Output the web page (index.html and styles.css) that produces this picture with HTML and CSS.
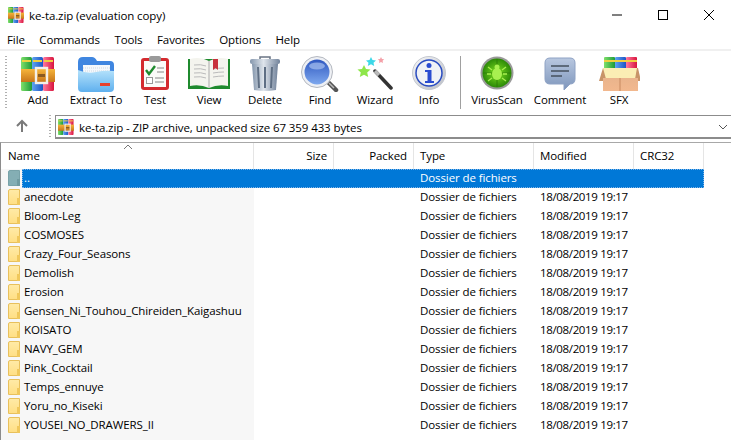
FILE: index.html
```html
<!DOCTYPE html>
<html lang="en">
<head>
  <meta charset="UTF-8">
  <title>ke-ta.zip (evaluation copy)</title>
  <link rel="stylesheet" href="styles.css">
</head>
<body>
  <svg class="defs" width="0" height="0">
    <defs>
      <linearGradient id="gGreen" x1="0" x2="1" y1="0" y2="0"><stop offset="0" stop-color="#7fe06a"/><stop offset="1" stop-color="#1f9a3a"/></linearGradient>
      <linearGradient id="gBlue" x1="0" x2="1" y1="0" y2="0"><stop offset="0" stop-color="#5fa4f2"/><stop offset="1" stop-color="#1c54c4"/></linearGradient>
      <linearGradient id="gRed" x1="0" x2="1" y1="0" y2="0"><stop offset="0" stop-color="#ff7aa0"/><stop offset="1" stop-color="#d8143c"/></linearGradient>
      <linearGradient id="gGold" x1="0" x2="0" y1="0" y2="1"><stop offset="0" stop-color="#f6b53a"/><stop offset="1" stop-color="#c8761a"/></linearGradient>
      <linearGradient id="gFolder" x1="0" x2="0" y1="0" y2="1"><stop offset="0" stop-color="#b5e2fb"/><stop offset="1" stop-color="#5fb0ee"/></linearGradient>
      <linearGradient id="gBin" x1="0" x2="1" y1="0" y2="0"><stop offset="0" stop-color="#8496ac"/><stop offset=".45" stop-color="#dfe5ec"/><stop offset="1" stop-color="#71829a"/></linearGradient>
      <linearGradient id="gLens" x1="0" x2="0" y1="0" y2="1"><stop offset="0" stop-color="#2f58c0"/><stop offset="1" stop-color="#7ea8ee"/></linearGradient>
      <linearGradient id="gSilver" x1="0" x2="1" y1="0" y2="1"><stop offset="0" stop-color="#f8f8f8"/><stop offset="1" stop-color="#b8bcc4"/></linearGradient>
      <linearGradient id="gBubble" x1="0" x2="0" y1="0" y2="1"><stop offset="0" stop-color="#b9c8e0"/><stop offset="1" stop-color="#7d95bb"/></linearGradient>
      <linearGradient id="gCard" x1="0" x2="0" y1="0" y2="1"><stop offset="0" stop-color="#eab48c"/><stop offset="1" stop-color="#f2b88e"/></linearGradient>
      <radialGradient id="gVirus"><stop offset="0" stop-color="#7fe020"/><stop offset="1" stop-color="#2c8a08"/></radialGradient>

      <symbol id="rar" viewBox="0 0 34 34">
        <rect x="0" y="0" width="11" height="34" rx="1.500" fill="url(#gGreen)"/>
        <rect x="11" y="0" width="11" height="34" rx="1.500" fill="url(#gBlue)"/>
        <rect x="22" y="0" width="11" height="34" rx="1.500" fill="url(#gRed)"/>
        <rect x="1" y="3" width="9" height="2" fill="#f0d040"/>
        <rect x="12" y="3" width="9" height="2" fill="#f0d040"/>
        <rect x="23" y="3" width="9" height="2" fill="#f0d040"/>
        <rect x="0" y="12" width="34" height="13" fill="url(#gGold)"/>
        <rect x="15" y="11" width="11" height="15" fill="none" stroke="#f4f0e8" stroke-width="2.4"/>
        <rect x="17" y="17" width="7" height="3" fill="#8a5a20"/>
      </symbol>
    </defs>
  </svg>

  <header class="title-bar">
    <svg class="app-icon" width="16" height="16"><use href="#rar"/></svg>
    <span class="title-text">ke-ta.zip (evaluation copy)</span>
    <div class="window-buttons">
      <svg width="12" height="12" viewBox="0 0 12 12"><path d="M1 6h10" stroke="#000"/></svg>
      <svg width="12" height="12" viewBox="0 0 12 12"><rect x="1.5" y="1.5" width="9" height="9" fill="none" stroke="#000"/></svg>
      <svg width="12" height="12" viewBox="0 0 12 12"><path d="M1 1l10 10M11 1L1 11" stroke="#000"/></svg>
    </div>
  </header>

  <nav class="menu-bar">
    <span>File</span><span>Commands</span><span>Tools</span><span>Favorites</span><span>Options</span><span>Help</span>
  </nav>

  <div class="toolbar">
    <div class="grip"></div>

    <div class="tool tool-add">
      <svg class="add-icon" width="34" height="34"><use href="#rar"/></svg>
      <span>Add</span>
    </div>

    <div class="tool tool-extract">
      <svg width="38" height="36" viewBox="0 0 38 36">
        <path d="M1 6q0-5 5-5h9q3 0 5 4h13q4 0 4 4v22H1z" fill="#3f86e0"/>
        <rect x="6" y="9" width="27" height="12" fill="#f4f8fc"/>
        <path d="M6 12h27M6 15h27M6 18h27" stroke="#cfd8e2" stroke-dasharray="1 1"/>
        <path d="M1 14q9 4 18 2t18-1v17q0 4-4 4H5q-4 0-4-4z" fill="url(#gFolder)"/>
        <rect x="23" y="27" width="10" height="3" fill="#e8402c"/>
      </svg>
      <span>Extract To</span>
    </div>

    <div class="tool tool-test">
      <svg width="30" height="36" viewBox="0 1 30 36">
        <rect x="1" y="3" width="28" height="32" rx="3" fill="#d42a2e"/>
        <rect x="4" y="6" width="22" height="26" fill="#fbfbf8"/>
        <rect x="9" y="1" width="12" height="6" rx="2" fill="#9a9a9a"/>
        <path d="M6 15l3 4 6-8" fill="none" stroke="#1f8a2e" stroke-width="2.4"/>
        <rect x="6.500" y="22.500" width="6" height="6" fill="#fff" stroke="#999"/>
        <path d="M17 13h7M17 17h7M15 23h9M15 27h9" stroke="#888"/>
      </svg>
      <span>Test</span>
    </div>

    <div class="tool tool-view">
      <svg width="42" height="36" viewBox="0 0 42 36">
        <path d="M0 3h42v30H0z" fill="#1f8a2e"/>
        <path d="M2 3q10-3 19 2q9-5 19-2v27q-10-2-19 2q-9-4-19-2z" fill="#f4f4ee"/>
        <path d="M21 5v27" stroke="#aaa"/>
        <path d="M6 9q7-1 12 1M6 13q7-1 12 1M6 17q7-1 12 1M6 21q7-1 12 1M25 13q6-1 11-1M25 17q6-1 11-1M25 21q6-1 11-1" stroke="#bbb" fill="none"/>
        <path d="M25 3h5v11l-2.500-2-2.500 2z" fill="#c8303c"/>
      </svg>
      <span>View</span>
    </div>

    <div class="tool tool-delete">
      <svg width="30" height="36" viewBox="0 0 30 36">
        <path d="M10 3V1h10v2" fill="none" stroke="#6a7484" stroke-width="1.500"/>
        <rect x="0" y="3" width="30" height="5" rx="2" fill="url(#gBin)"/>
        <path d="M2 8h26l-2 26q-11 2-22 0z" fill="url(#gBin)"/>
        <path d="M8 11l1 21M15 11v21M22 11l-1 21" stroke="#5f6f84" stroke-width="2"/>
      </svg>
      <span>Delete</span>
    </div>

    <div class="tool tool-find">
      <svg width="38" height="36" viewBox="0 0 38 36">
        <path d="M25 24l10 10" stroke="#555" stroke-width="4.500" stroke-linecap="round"/>
        <path d="M28 27l5 5" stroke="#bbb" stroke-width="1.500"/>
        <circle cx="16" cy="16" r="15.500" fill="#eef0f4" stroke="#b4b8c0"/>
        <circle cx="16" cy="16" r="12.500" fill="url(#gLens)"/>
        <ellipse cx="16" cy="10" rx="8" ry="3.500" fill="#a8c0f0" opacity=".7"/>
      </svg>
      <span>Find</span>
    </div>

    <div class="tool tool-wizard">
      <svg width="36" height="36" viewBox="0 0 36 36">
        <path d="M18 15l16 17" stroke="#333" stroke-width="3.500" stroke-linecap="round"/>
        <path d="M18 15l4 4" stroke="#bbb" stroke-width="3.500"/>
        <path d="M7 9l2 4 4.500.5-3.300 3 1 4.500-4.200-2.300L2.800 21l1-4.500-3.300-3 4.500-.5z" fill="#8ee64a"/>
        <path d="M14 1l1.500 3 3.500.4-2.500 2.300.7 3.300-3.200-1.700-3.200 1.700.7-3.300L9 4.400l3.500-.4z" fill="#3cd8e8"/>
        <path d="M24 1l1 2 2.200.3-1.600 1.500.4 2.200-2-1-2 1 .4-2.200-1.600-1.500L23 3z" fill="#f4a0a8"/>
      </svg>
      <span>Wizard</span>
    </div>

    <div class="tool tool-info">
      <svg width="34" height="36" viewBox="0 1 34 36">
        <circle cx="17" cy="18" r="16.500" fill="url(#gSilver)" stroke="#c4c8d0"/>
        <circle cx="17" cy="18" r="13" fill="#f0f2f6" stroke="#2a4cc0" stroke-width="1.500"/>
        <circle cx="17" cy="10.500" r="2.500" fill="#2a4cd0"/>
        <path d="M13 15h6.500v11H22v2h-9v-2h2.500v-9H13z" fill="#2a4cd0"/>
      </svg>
      <span>Info</span>
    </div>

    <div class="tool-sep"></div>

    <div class="tool tool-virus">
      <svg width="34" height="36" viewBox="0 -1 34 36">
        <circle cx="17" cy="16" r="16.500" fill="#9a9a9a"/>
        <circle cx="17" cy="16" r="14.500" fill="url(#gVirus)"/>
        <path d="M17 2v28M3 16h28" stroke="#2c7a08" stroke-width=".8"/>
        <ellipse cx="17" cy="17" rx="5" ry="6" fill="#a8f050"/>
        <circle cx="17" cy="10" r="2.500" fill="#a8f050"/>
        <path d="M12 13l-4-3M22 13l4-3M11 17H7M23 17h4M12 21l-4 3M22 21l4 3" stroke="#a8f050" stroke-width="1.300"/>
      </svg>
      <span>VirusScan</span>
    </div>

    <div class="tool tool-comment">
      <svg width="32" height="36" viewBox="0 0 32 36">
        <path d="M6 2h20q5 0 5 5v16q0 5-5 5l-6 6v-6H6q-5 0-5-5V7q0-5 5-5z" fill="url(#gBubble)" stroke="#8ea2c4"/>
        <path d="M7 10h18M7 15h18M7 20h11" stroke="#46505e" stroke-width="1.600"/>
      </svg>
      <span>Comment</span>
    </div>

    <div class="tool tool-sfx">
      <svg width="42" height="36" viewBox="-1 0 42 36">
        <rect x="5" y="1" width="11" height="16" rx="1" fill="url(#gGreen)"/>
        <rect x="16" y="1" width="11" height="16" rx="1" fill="url(#gBlue)"/>
        <rect x="27" y="1" width="11" height="16" rx="1" fill="url(#gRed)"/>
        <rect x="5" y="4" width="33" height="2" fill="#f0d040"/>
        <path d="M4 12h35l3 13h-42z" fill="#c89468"/>
        <path d="M4 12h34l-2 11H7z" fill="#fbeeb4"/>
        <rect x="4" y="22" width="35" height="13" fill="url(#gCard)"/>
        <path d="M21 22v13" stroke="#c88a60"/>
      </svg>
      <span>SFX</span>
    </div>
  </div>

  <div class="address-bar">
    <svg class="up-arrow" width="12" height="14" viewBox="0 0 12 14"><path d="M6 13V2M1 7l5-5 5 5" fill="none" stroke="#7a7a7a" stroke-width="2"/></svg>
    <div class="grip grip-small"></div>
    <div class="address-box">
      <svg width="16" height="16"><use href="#rar"/></svg>
      <span class="address-text">ke-ta.zip - ZIP archive, unpacked size 67 359 433 bytes</span>
      <svg class="chevron" width="10" height="6" viewBox="0 0 10 6"><path d="M1 1l4 4 4-4" fill="none" stroke="#555"/></svg>
    </div>
  </div>

  <main class="file-list">
    <div class="list-head">
      <div class="head-cell head-name">Name<svg class="sort-mark" width="10" height="5" viewBox="0 0 10 5"><path d="M1 5l4-4 4 4" fill="none" stroke="#777"/></svg></div>
      <div class="head-cell head-right">Size</div>
      <div class="head-cell head-right">Packed</div>
      <div class="head-cell">Type</div>
      <div class="head-cell">Modified</div>
      <div class="head-cell">CRC32</div>
    </div>

    <div class="row row-up">
      <span class="folder"></span>
      <div class="cols selected"><span>..</span><span></span><span></span><span>Dossier de fichiers</span><span></span><span></span></div>
    </div>
    <div class="row"><span class="folder"></span><div class="cols"><span>anecdote</span><span></span><span></span><span>Dossier de fichiers</span><span>18/08/2019 19:17</span><span></span></div></div>
    <div class="row"><span class="folder"></span><div class="cols"><span>Bloom-Leg</span><span></span><span></span><span>Dossier de fichiers</span><span>18/08/2019 19:17</span><span></span></div></div>
    <div class="row"><span class="folder"></span><div class="cols"><span>COSMOSES</span><span></span><span></span><span>Dossier de fichiers</span><span>18/08/2019 19:17</span><span></span></div></div>
    <div class="row"><span class="folder"></span><div class="cols"><span>Crazy_Four_Seasons</span><span></span><span></span><span>Dossier de fichiers</span><span>18/08/2019 19:17</span><span></span></div></div>
    <div class="row"><span class="folder"></span><div class="cols"><span>Demolish</span><span></span><span></span><span>Dossier de fichiers</span><span>18/08/2019 19:17</span><span></span></div></div>
    <div class="row"><span class="folder"></span><div class="cols"><span>Erosion</span><span></span><span></span><span>Dossier de fichiers</span><span>18/08/2019 19:17</span><span></span></div></div>
    <div class="row"><span class="folder"></span><div class="cols"><span>Gensen_Ni_Touhou_Chireiden_Kaigashuu</span><span></span><span></span><span>Dossier de fichiers</span><span>18/08/2019 19:17</span><span></span></div></div>
    <div class="row"><span class="folder"></span><div class="cols"><span>KOISATO</span><span></span><span></span><span>Dossier de fichiers</span><span>18/08/2019 19:17</span><span></span></div></div>
    <div class="row"><span class="folder"></span><div class="cols"><span>NAVY_GEM</span><span></span><span></span><span>Dossier de fichiers</span><span>18/08/2019 19:17</span><span></span></div></div>
    <div class="row"><span class="folder"></span><div class="cols"><span>Pink_Cocktail</span><span></span><span></span><span>Dossier de fichiers</span><span>18/08/2019 19:17</span><span></span></div></div>
    <div class="row"><span class="folder"></span><div class="cols"><span>Temps_ennuye</span><span></span><span></span><span>Dossier de fichiers</span><span>18/08/2019 19:17</span><span></span></div></div>
    <div class="row"><span class="folder"></span><div class="cols"><span>Yoru_no_Kiseki</span><span></span><span></span><span>Dossier de fichiers</span><span>18/08/2019 19:17</span><span></span></div></div>
    <div class="row"><span class="folder"></span><div class="cols"><span>YOUSEI_NO_DRAWERS_II</span><span></span><span></span><span>Dossier de fichiers</span><span>18/08/2019 19:17</span><span></span></div></div>
  </main>
</body>
</html>
```

FILE: styles.css
```css
body {
  font-family: "Open Sans", "Noto Sans", sans-serif;
  font-size: 11.5px;
  letter-spacing: -0.1px;
  margin: 0;
  width: 731px;
  height: 440px;
  overflow: hidden;
  background-color: white;
  color: black;
}

.defs {
  display: block;
  height: 0;
}

.title-bar {
  display: flex;
  align-items: center;
  height: 30px;
  padding-left: 8px;
}

.title-text {
  margin-left: 5px;
}

.window-buttons {
  display: flex;
  gap: 34px;
  margin-left: auto;
  margin-right: 16px;
}

.menu-bar {
  display: flex;
  gap: 14.5px;
  align-items: center;
  height: 19px;
  padding-left: 7px;
}

.toolbar {
  display: flex;
  align-items: flex-start;
  height: 63px;
  border-top: 2px solid #f0f0f0;
  box-sizing: border-box;
  padding-left: 5px;
  padding-top: 5px;
}

.grip {
  width: 2px;
  height: 52px;
  margin-right: 7px;
  background: repeating-linear-gradient(#b0b0b0 0 1px, transparent 1px 3px);
}

.grip-small {
  height: 22px;
  margin: 0 4px 0 0;
}

.tool {
  display: flex;
  flex-direction: column;
  align-items: center;
  flex: none;
}

.tool span {
  line-height: 16px;
}

.add-icon {
  margin: 1px 0;
}

.tool-add { width: 48px; }
.tool-extract { width: 68px; }
.tool-test { width: 50px; }
.tool-view { width: 58px; }
.tool-delete { width: 54px; }
.tool-find { width: 56px; }
.tool-wizard { width: 54px; }
.tool-info { width: 54px; }
.tool-virus { width: 62px; }
.tool-comment { width: 64px; }
.tool-sfx { width: 54px; }

.tool-sep {
  width: 1px;
  height: 53px;
  margin: 0 5px 0 4px;
  background-color: #a0a0a0;
}

.address-bar {
  display: flex;
  align-items: center;
  height: 28px;
  padding-left: 16px;
}

.up-arrow {
  margin-right: 21px;
}

.address-box {
  display: flex;
  align-items: center;
  flex: 1;
  height: 24px;
  border: 1px solid #8c8c8c;
  border-right: 0;
  border-bottom-width: 2px;
  box-sizing: border-box;
  padding-left: 2px;
  margin-top: 2px;
}

.address-text {
  margin-left: 5px;
  padding-top: 1px;
}

.chevron {
  margin-left: auto;
  margin-right: 3px;
}

.file-list {
  margin-top: 2px;
  height: 300px;
  border-left: 1px solid #8c8c8c;
  border-top: 1px solid #a8a8a8;
  background: linear-gradient(90deg, #f7f7f7 253px, white 253px);
}

.list-head {
  display: grid;
  grid-template-columns: 253px 80px 80px 120px 100px 70px;
  height: 26px;
  background-color: white;
  width: 703px;
  align-items: stretch;
  line-height: 26px;
}

.head-cell {
  display: flex;
  align-items: flex-start;
  padding: 0 6px;
  border-right: 1px solid #e5e5e5;
  position: relative;
}

.head-name {
  padding-left: 7px;
}

.head-right {
  justify-content: flex-end;
}

.sort-mark {
  position: absolute;
  left: 122px;
  top: 1px;
}

.row {
  display: flex;
  height: 19px;
  line-height: 18px;
}

.folder {
  flex: none;
  position: relative;
  box-sizing: border-box;
  width: 12px;
  height: 16px;
  margin: 1px 2px 0 7px;
  background: linear-gradient(#ffeaa6, #ffdf85);
  border: 1px solid #e8c05c;
  border-top-left-radius: 2px;
}

.folder::after {
  content: "";
  position: absolute;
  right: -1px;
  bottom: -1px;
  width: 3px;
  height: 7px;
  background-color: #f0c85c;
}

.row-up .folder {
  background: #84aeb4;
  border-color: #78a2a8;
}

.row-up .folder::after {
  background-color: #6f9aa0;
}

.cols {
  display: grid;
  grid-template-columns: 232px 80px 80px 120px 100px 70px;
  width: 682px;
}

.cols span {
  white-space: nowrap;
}

.cols span:nth-child(1) {
  padding-left: 2px;
}

.cols span:nth-child(4), .cols span:nth-child(5) {
  padding-left: 6px;
}

.cols span:nth-child(5) {
  letter-spacing: -0.35px;
}

.selected {
  background-color: #0078d7;
  color: white;
  outline: 1px dotted #7fb4e8;
  outline-offset: -1px;
}
```
